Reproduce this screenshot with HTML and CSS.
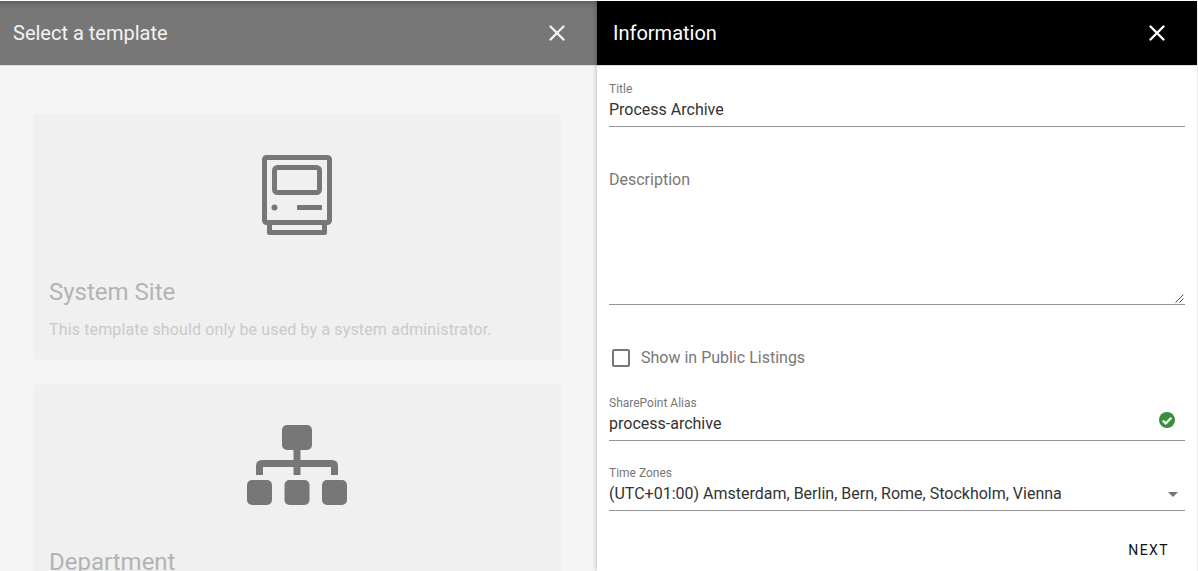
FILE: index.html
```html
<!DOCTYPE html>
<html lang="en">
<head>
<meta charset="utf-8">
<title>Select a template</title>
<link rel="stylesheet" href="styles.css">
</head>
<body>
<div class="app">
  <section class="templates">
    <header class="bar bar-dim">
      <h1 class="bar-title">Select a template</h1>
      <svg class="close" viewBox="0 0 18 18"><path d="M2.500 2.500l13 13M15.500 2.500l-13 13"/></svg>
    </header>
    <div class="cards">
      <article class="card">
        <svg class="card-icon" viewBox="0 0 100 80">
          <g class="outline">
            <rect x="17.500" y="2.500" width="65" height="65" rx="2"/>
            <rect x="27.500" y="12.500" width="45" height="25" rx="3"/>
            <path d="M22.500 69v8.500h55V69" stroke-linejoin="round"/>
          </g>
          <circle cx="27.500" cy="52.500" r="3"/>
          <rect x="50" y="50" width="25" height="5" rx=".7"/>
        </svg>
        <h2 class="card-title">System Site</h2>
        <p class="card-text">This template should only be used by a system administrator.</p>
      </article>
      <article class="card">
        <svg class="card-icon" viewBox="0 0 100 80">
          <rect x="35" y="0" width="30" height="25" rx="5"/>
          <rect x="0" y="55" width="25" height="25" rx="5"/>
          <rect x="37.500" y="55" width="25" height="25" rx="5"/>
          <rect x="75" y="55" width="25" height="25" rx="5"/>
          <path class="links" d="M50 24v26M12.500 50v-9q0-2.500 2.500-2.500h70q2.500 0 2.500 2.500v9"/>
        </svg>
        <h2 class="card-title">Department</h2>
      </article>
    </div>
  </section>
  <section class="panel">
    <header class="bar">
      <h1 class="bar-title">Information</h1>
      <svg class="close" viewBox="0 0 18 18"><path d="M2.500 2.500l13 13M15.500 2.500l-13 13"/></svg>
    </header>
    <form class="form">
      <div class="field">
        <span class="label">Title</span>
        <div class="value">Process Archive</div>
      </div>
      <div class="field field-area">
        <span class="placeholder">Description</span>
        <svg class="grip" viewBox="0 0 9 9"><path d="M.5 8.500l8-8M4.500 8.500l4-4"/></svg>
      </div>
      <div class="check">
        <span class="box"></span>
        <span class="check-text">Show in Public Listings</span>
      </div>
      <div class="field">
        <span class="label">SharePoint Alias</span>
        <div class="value">process-archive
          <svg class="valid" viewBox="0 0 16 16"><circle cx="8" cy="8" r="8"/><path d="M3.800 8.600l2.900 2.800 5.700-5.700"/></svg>
        </div>
      </div>
      <div class="field field-zone">
        <span class="label">Time Zones</span>
        <div class="value">(UTC+01:00) Amsterdam, Berlin, Bern, Rome, Stockholm, Vienna
          <svg class="arrow" viewBox="0 0 10 5"><path d="M0 0h10L5 5z"/></svg>
        </div>
      </div>
      <div class="actions"><span class="next">NEXT</span></div>
    </form>
  </section>
</div>
</body>
</html>
```
FILE: styles.css
```css
* { box-sizing: border-box; }

body {
  margin: 0;
  background: #fff;
  font-family: Roboto, "Liberation Sans", sans-serif;
  overflow: hidden;
}

h1, h2, p { margin: 0; }

.app {
  display: grid;
  grid-template-columns: 597px 600px;
  height: 571px;
  padding-top: 1px;
  background: linear-gradient(#fff 1px, #f0f0f0 1px);
}

.templates { background: #f5f5f5; overflow: hidden; }

.panel {
  background: #fff;
  box-shadow: 0 0 5px rgba(0, 0, 0, .3);
  clip-path: inset(0 0 0 -16px);
}

.bar {
  display: flex;
  align-items: center;
  justify-content: space-between;
  height: 64px;
  padding: 0 31px 0 16px;
  background: #000;
  color: #fff;
  box-shadow: 0 1px 0 #e0e0e0;
}

.bar-dim {
  padding-left: 13px;
  background: linear-gradient(#5d605f, #6e6e6e 4px, #777 9px);
  color: #f3f3f3;
}

.bar-title { font-size: 20px; font-weight: 400; line-height: 24px; }

.close {
  width: 18px;
  height: 18px;
  fill: none;
  stroke: currentColor;
  stroke-width: 2.4;
  stroke-linecap: round;
}

.cards {
  display: flex;
  flex-direction: column;
  gap: 24px;
  padding: 49px 36px 0 33px;
}

.card {
  height: 246px;
  padding: 41px 16px 0;
  border-radius: 4px;
  background: #f0f0f0;
}

.card-icon {
  display: block;
  width: 100px;
  height: 80px;
  margin: 0 auto;
  fill: #777;
}

.outline, .links { fill: none; stroke: #777; }
.outline { stroke-width: 5; }
.links { stroke-width: 7; }

.card-title {
  margin-top: 41px;
  color: #b3b3b3;
  font-size: 24px;
  font-weight: 400;
  line-height: 32px;
}

.card-text {
  margin-top: 10px;
  color: #cacaca;
  font-size: 16px;
  letter-spacing: .14px;
  line-height: 24px;
}

.form { padding: 16px 12px 0; }

.field {
  height: 46px;
  border-bottom: 1px solid #949494;
  color: #333;
}

.label {
  display: block;
  color: #777;
  font-size: 12px;
  line-height: 16px;
}

.value {
  display: flex;
  align-items: center;
  justify-content: space-between;
  margin-top: 1px;
  font-size: 16px;
  line-height: 24px;
}

.field-area {
  display: flex;
  justify-content: space-between;
  height: 137px;
  margin-top: 41px;
}

.placeholder { color: #777; font-size: 16px; line-height: 24px; }

.grip {
  align-self: flex-end;
  width: 9px;
  height: 9px;
  margin: 0 1px 1px 0;
  fill: none;
  stroke: #555;
}

.check {
  display: flex;
  align-items: center;
  gap: 11px;
  height: 24px;
  margin: 41px 0 25px 3px;
}

.box {
  width: 18px;
  height: 18px;
  border: 2px solid #757575;
  border-radius: 2px;
}

.check-text { color: #777; font-size: 16px; line-height: 24px; }

.valid { width: 16px; height: 16px; margin: -9px 10px 0 0; fill: #388e3c; }
.valid path { fill: none; stroke: #fff; stroke-width: 2.2; }

.field-zone { margin-top: 24px; }
.arrow { width: 10px; height: 5px; margin: 0 7px 0 0; fill: #757575; }

.actions { display: flex; justify-content: flex-end; padding: 27px 16px 0 0; }

.next {
  color: #111;
  font-size: 14px;
  font-weight: 400;
  letter-spacing: 1.4px;
  line-height: 24px;
}
```
